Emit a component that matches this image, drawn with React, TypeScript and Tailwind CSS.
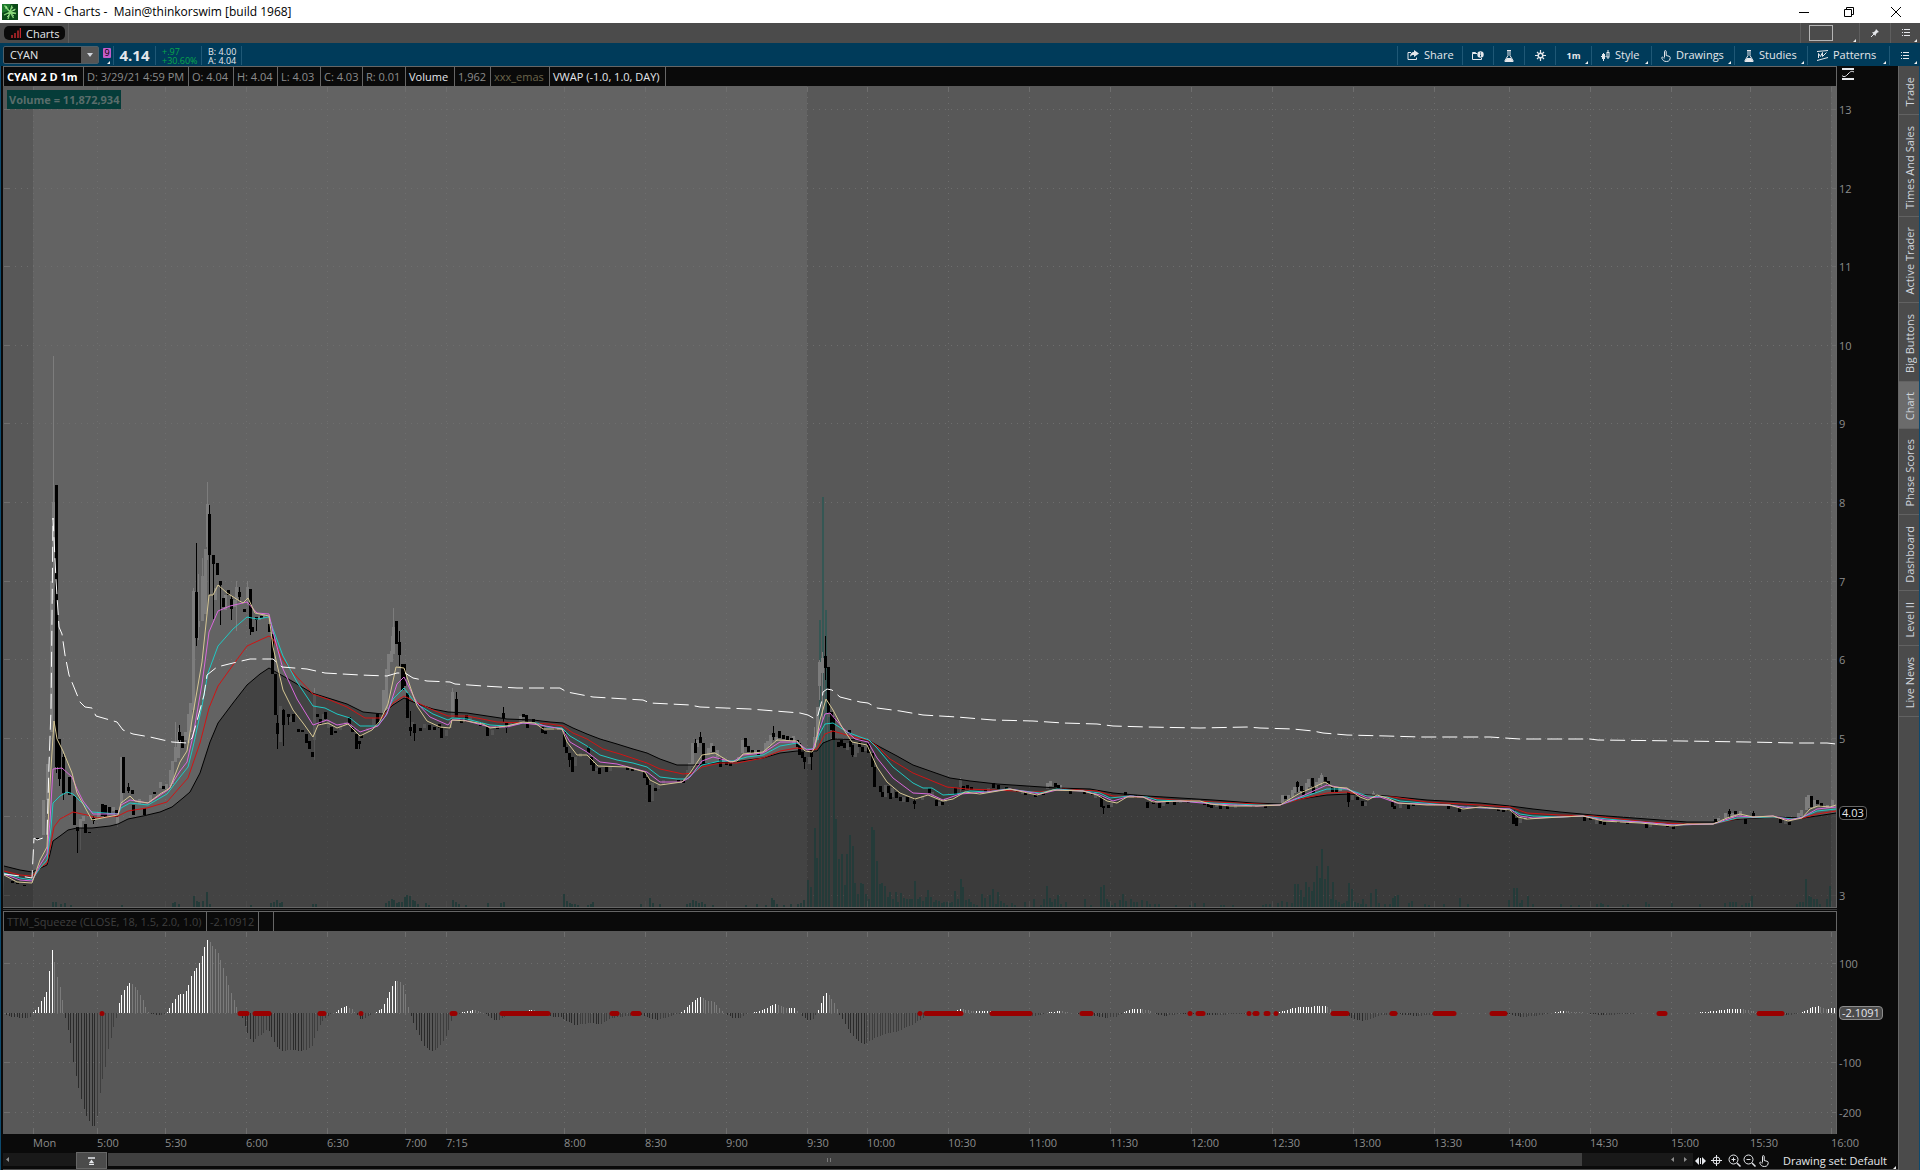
import type { ReactNode } from "react";

type Pt = [number, number];

const pts = (s: string): Pt[] => s.trim().split(/\s+/).map((p) => p.split(",").map(Number) as Pt);

/* ---------- market data, in chart units ---------- */

const SLOW = "4,866 20,870 32,872 47,865 50,854 53,841 60,836 68,830 77,828 92,828 110,826 118,824 128,819 143,816 160,812 172,807 183,798 190,792 200,773 210,742 218,723 233,703 247,685 260,674 269,668 283,676 297,684 312,693 328,698 347,704 363,712 383,714 393,705 404,698 418,704 433,709 448,712 467,713 487,716 507,719 533,720 550,722 563,723 573,728 587,734 600,739 617,744 633,749 647,753 660,759 677,765 693,765 713,763 733,762 763,758 780,753 797,751 817,751 823,743 833,739 868,740 880,747 897,756 913,765 930,771 950,778 970,781 997,784 1027,786 1057,788 1090,789 1113,793 1147,796 1180,798 1213,800 1253,803 1280,804 1300,799 1327,795 1350,794 1387,796 1427,800 1480,803 1510,806 1533,809 1560,812 1593,815 1647,819 1687,822 1713,822 1740,819 1773,817 1803,818 1817,816 1836,813";
const RED = "4,871 20,875 32,876 40,868 47,863 51,843 54,827 60,819 73,812 87,815 97,818 118,816 128,811 147,808 167,802 180,787 188,778 200,743 209,708 218,686 233,665 247,646 260,640 269,636 273,639 283,660 297,677 313,694 330,700 347,707 365,718 382,718 393,703 404,696 420,704 433,710 448,716 467,716 497,722 527,723 550,724 563,726 573,733 587,739 603,749 620,754 647,763 660,769 683,774 693,773 702,767 720,763 737,763 763,758 780,751 797,748 813,750 817,749 825,734 833,731 850,736 868,740 877,746 890,759 913,773 930,780 947,787 967,789 993,790 1040,792 1063,789 1097,791 1113,796 1143,797 1173,800 1213,802 1280,805 1297,800 1327,793 1347,792 1367,796 1393,797 1427,802 1480,805 1510,807 1527,813 1560,815 1593,816 1647,822 1683,824 1713,824 1740,818 1773,817 1790,819 1803,818 1817,814 1836,811";
const CYAN = "4,873 20,878 32,880 40,868 47,860 51,828 53,803 60,796 67,792 73,794 80,801 92,812 118,814 121,808 130,803 148,805 167,794 180,777 188,767 193,747 202,706 208,673 218,646 233,629 247,617 257,619 269,617 273,629 283,656 297,682 313,706 325,708 337,714 350,718 360,726 377,726 385,717 393,699 404,688 413,700 420,706 433,714 448,720 452,718 467,719 490,725 507,726 523,723 537,723 547,727 562,728 570,736 587,746 600,755 617,760 633,763 647,767 660,777 677,779 687,779 702,765 720,761 733,761 747,757 763,755 780,746 797,743 805,749 813,749 820,733 825,724 833,723 847,732 860,737 869,740 877,748 893,767 913,783 923,788 932,788 943,795 957,794 970,791 987,792 1007,789 1040,793 1057,789 1083,791 1100,793 1110,798 1130,796 1147,797 1157,800 1180,801 1213,803 1257,805 1280,805 1297,799 1327,789 1347,789 1367,796 1387,797 1400,801 1447,805 1463,807 1510,809 1520,814 1533,816 1560,817 1583,816 1607,819 1673,825 1713,824 1737,818 1773,817 1793,819 1803,817 1817,811 1836,809";
const PINK = "4,874 20,880 32,881 40,865 47,854 50,821 53,769 62,768 72,777 77,789 83,801 93,814 118,814 121,805 130,800 148,803 168,790 180,771 187,762 193,736 202,684 209,632 218,611 230,606 247,602 257,613 269,614 273,632 283,669 297,699 313,725 327,720 337,725 348,723 360,732 378,726 387,714 397,684 404,677 407,683 417,703 430,717 448,725 452,720 463,720 490,727 507,727 523,723 540,725 562,729 570,742 587,752 600,762 617,764 647,772 660,782 682,782 690,777 702,761 713,757 733,762 743,755 763,753 780,742 797,742 807,750 813,749 820,728 825,714 830,713 843,728 855,739 868,742 877,758 893,778 913,793 930,794 943,800 960,794 987,792 1010,789 1040,794 1057,790 1083,791 1100,795 1113,801 1130,796 1143,797 1157,802 1180,801 1213,804 1257,806 1280,805 1300,797 1327,785 1347,789 1367,798 1380,797 1397,803 1447,805 1463,807 1510,809 1520,816 1533,818 1560,817 1583,816 1604,820 1640,822 1673,825 1713,824 1737,816 1753,817 1773,816 1790,820 1803,817 1817,809 1836,807";
const TAN = "4,875 17,882 32,883 40,860 47,847 50,784 54,721 57,739 63,751 72,773 77,793 92,820 107,817 118,815 121,803 130,796 135,801 148,803 160,794 170,788 180,762 187,751 193,714 202,662 209,595 213,595 218,585 227,593 238,600 243,603 248,598 255,613 269,616 273,647 283,690 293,710 303,723 313,737 318,725 328,723 337,728 348,724 360,736 372,730 380,721 388,704 396,667 404,668 413,695 417,706 427,721 440,727 450,728 452,720 467,721 483,724 490,728 507,726 523,722 535,723 543,729 562,729 567,742 577,755 587,755 598,766 627,767 645,772 650,780 660,785 682,782 690,773 702,755 715,753 730,762 737,761 743,754 763,752 777,740 797,741 805,751 812,752 815,747 820,720 826,699 833,710 842,727 852,742 867,745 877,767 887,782 900,793 915,799 928,795 943,801 953,799 965,792 980,794 1010,789 1037,795 1053,790 1083,791 1097,795 1107,801 1117,803 1127,797 1143,797 1153,802 1180,801 1200,801 1210,804 1230,806 1257,806 1280,805 1290,799 1300,793 1312,788 1325,782 1333,787 1347,788 1360,797 1368,800 1377,795 1387,798 1398,803 1427,805 1450,805 1463,809 1480,807 1510,810 1518,817 1527,819 1560,817 1583,816 1603,821 1640,823 1673,826 1687,824 1713,824 1727,818 1740,814 1753,817 1773,816 1788,821 1802,818 1810,809 1818,806 1830,807 1836,805";
const VWAP = "4,874 20,876 32,878 34,838 37,840 43,838 47,836 49,765 51,710 52,617 53,518 56,580 59,627 62,634 65,655 69,675 80,702 85,707 92,708 96,716 117,722 123,730 133,734 150,737 172,742 187,743 192,738 197,721 201,706 204,695 207,675 217,667 233,663 250,659 273,659 282,667 307,669 325,673 360,675 387,676 397,673 405,673 413,678 427,681 450,682 455,684 483,686 517,688 560,688 567,692 593,697 643,700 650,703 690,705 700,707 750,709 800,713 808,715 815,719 818,715 822,700 823,692 827,689 832,690 840,697 860,702 868,703 877,708 900,711 923,715 957,717 993,720 1033,721 1063,723 1097,724 1113,726 1147,727 1200,728 1247,727 1260,728 1293,729 1313,731 1323,733 1347,735 1387,736 1420,737 1490,737 1520,739 1590,739 1598,740 1683,741 1747,742 1797,743 1827,743 1836,744";

/* x, body top, body bottom, optional wick top and wick bottom */
const DOWN = "12,881,883 17,883,884 24,885,886 37,838,840 56,485,767,485,773 59,739,779,739,786 63,757,793,754,800 69,777,795 74,796,825 77,827,831,827,853 85,824,833 89,832,833 93,818,821,816,824 102,804,816 105,805,817 109,807,813 116,810,817 123,757,793 128,787,791,783,793 132,790,794 133,805,815 144,808,815 154,792,794 163,786,789 179,732,740,725,743 182,736,748 196,592,638,543,646 209,514,555,505,595 213,555,564,555,619 217,563,575 220,581,585,581,625 223,598,607 228,590,595 231,599,609,596,620 239,592,597,587,601 244,609,612 250,589,629,589,635 252,627,632 256,617,620,617,631 261,616,618 269,624,632 272,634,674 275,674,715 277,723,734,715,749 283,710,725,709,746 288,714,717,714,725 293,714,722 298,729,732 302,730,732 306,734,743 309,741,749 312,752,757 317,714,717 320,719,725 325,712,719 331,727,735 335,731,733 349,717,725 352,727,732 356,734,749 359,741,744,741,749 361,735,738 377,714,726 396,621,644 399,642,655,631,666 402,664,690 404,664,686 407,693,718 410,727,731,711,736 414,724,733,724,741 420,728,731 429,725,730 434,727,730 441,728,738 439,724,728 456,699,717,692,717 461,718,723 466,715,722 480,722,726 487,727,736 497,726,729 503,713,718,707,722 506,723,728,723,733 523,714,717 526,715,722 527,723,728 533,719,722 542,727,733 545,731,734 555,728,730 564,732,747 566,747,753 569,753,760,753,767 572,757,772 588,748,753,746,753 591,757,765 593,763,771 599,768,774 606,767,772 627,767,770 632,768,771 644,772,778 647,777,785 649,785,802 655,788,791 678,780,782 683,780,783 695,743,753,739,753 700,737,743,732,743 703,743,765 713,746,752 720,758,767 726,762,765 730,763,766 745,738,747 748,746,752 752,750,753 758,750,755 773,733,737,726,740 779,731,738 783,735,739 787,736,740 791,738,741 797,740,747 799,743,755 802,752,758 804,757,762,757,769 811,750,757,750,770 825,656,668,636,680 828,667,713 831,712,730 833,717,740 838,742,747 841,740,746 844,743,748 849,730,734 850,741,747 852,745,755,745,757 859,742,747 862,747,752 868,743,753 872,753,767 874,767,787 880,786,792 882,792,797 888,786,793 890,793,799 896,792,798 900,797,801 907,797,802 914,801,804,798,809 929,788,793 936,800,806 942,802,805 955,788,795 963,786,790 967,785,789 971,787,790 978,792,794 985,790,793 993,783,788 998,785,789 1006,787,790 1017,790,792 1025,792,795 1035,793,797 1043,792,795 1055,783,787 1058,785,788 1063,788,791 1070,790,794 1084,792,794 1092,792,795 1101,797,807 1103,806,808,806,814 1108,805,808 1125,792,795 1135,795,798 1147,802,808 1153,801,804 1159,803,808 1167,801,804 1174,802,805 1188,800,803 1204,803,805 1208,803,807 1211,805,808 1220,805,809 1227,806,809 1253,805,807 1265,806,808 1285,796,799 1297,782,787,781,792 1301,786,791 1303,790,795 1312,778,786 1313,786,793 1325,777,782 1328,781,785 1332,787,792 1336,788,792 1348,792,802,792,807 1357,797,800 1362,801,806 1375,795,798 1392,802,807 1394,806,809 1408,805,809 1413,804,806 1448,805,809 1459,808,812 1465,806,808 1487,807,809 1498,808,811 1503,808,812 1508,809,811 1513,810,824 1516,818,826 1528,817,819 1584,817,821 1590,818,820 1600,821,824 1604,822,825 1618,821,823 1627,822,824 1646,823,828 1657,823,825 1667,824,827 1673,826,829 1715,819,822 1729,811,814,809,818 1735,811,814 1745,818,824 1753,813,816,811,816 1780,818,823 1789,822,825 1811,796,807 1817,800,804 1821,803,807";
const UP = "43,800,835 47,764,800 51,581,732 53,502,560,356,600 80,819,828,819,850 83,816,821 98,812,817 113,807,811 121,757,803 117,817,824,817,827 139,799,804 150,795,802 160,782,788 166,784,789 170,770,786 172,761,784 175,747,762,722,762 178,732,758,728,758 185,732,740 188,714,743 190,703,732 193,591,710,588,710 198,621,627,574,640 202,576,621,558,621 205,549,614 207,504,547,482,560 215,588,600 225,595,610 234,600,607 236,587,599,581,631 247,587,599,581,605 259,616,620 263,614,618 280,706,742 290,716,722 314,695,740,688,760 323,714,722 328,720,728 340,725,730 345,722,725 367,728,731 373,718,725 383,690,714 386,669,710 388,654,675 391,651,662,636,662 393,627,654,608,654 412,722,731 424,724,728 446,730,736 450,720,728 452,692,718,688,718 470,717,721 492,730,735 510,722,726 520,716,722 575,757,766 580,753,757 596,768,771 610,766,771 652,783,801 658,785,789 663,780,785 687,770,780 689,763,773 692,743,767 697,740,747 708,748,755 711,743,752 717,750,757 723,760,764 738,757,761 742,740,753 755,750,754 765,743,752 767,741,748 770,735,745 776,737,741 793,736,743 809,757,764 814,737,747,727,747 817,707,740 819,662,686,660,700 822,658,673,652,720 847,743,750 855,743,757 857,743,753 865,746,751 885,785,797 892,788,797 903,797,802 922,796,800 932,792,797 939,802,806 945,798,802 960,780,787,778,792 988,788,792 1022,791,794 1047,783,789 1050,781,786 1060,785,789 1095,793,798 1111,803,807 1163,802,806 1180,800,803 1216,804,807 1235,804,808 1282,795,803 1288,795,801 1292,790,797 1294,787,793 1299,786,792 1306,783,790 1308,779,787 1316,782,788 1319,778,785 1321,775,782,773,786 1340,787,791 1352,795,800 1365,802,806 1373,793,798,791,798 1400,804,808 1520,818,823 1525,816,820 1596,820,824 1650,823,827 1718,818,822 1725,813,818 1732,813,818 1740,811,816 1785,820,824 1798,813,818 1801,810,816 1806,797,810 1808,795,808 1814,800,807 1827,805,808 1832,800,807";

const VOLUME = "52,5 55,5 60,3 64,4 70,2 121,2 172,4 174,5 178,3 193,11 196,6 198,5 202,6 206,15 209,3 250,2 270,4 273,5 276,7 279,4 281,5 312,3 315,3 385,4 388,6 391,8 393,7 396,4 398,5 401,5 404,10 406,12 409,11 412,7 414,6 417,3 425,4 428,2 452,7 455,5 458,3 465,2 487,4 500,4 503,5 563,13 566,6 569,4 571,3 574,3 577,2 587,2 590,3 592,5 640,3 649,9 652,4 659,3 686,3 689,4 692,7 695,6 698,4 701,5 704,3 712,2 745,2 756,3 765,2 771,9 773,7 776,3 783,2 790,3 797,3 800,4 803,7 807,27 810,20 814,79 816,49 819,287 822,410 825,297 828,190 833,190 835,88 838,48 841,53 844,22 846,53 849,72 852,61 854,24 857,13 860,24 862,23 865,13 868,8 871,80 873,77 876,46 879,23 881,24 884,21 887,10 889,15 892,8 895,15 897,5 900,14 903,9 906,8 909,8 911,8 914,26 917,8 919,10 922,6 925,10 927,17 930,10 933,5 935,7 938,6 941,4 943,5 946,5 949,4 951,5 954,16 957,8 960,28 962,20 965,7 968,8 970,5 973,3 976,2 981,13 984,9 989,12 992,18 995,3 997,15 1000,6 1003,4 1006,2 1011,4 1014,2 1024,5 1033,8 1040,2 1043,8 1046,21 1049,9 1051,5 1054,8 1057,12 1060,3 1065,5 1084,8 1090,2 1100,20 1103,22 1106,8 1108,5 1111,2 1114,4 1119,7 1122,13 1125,6 1130,8 1133,5 1136,5 1141,7 1146,6 1149,3 1154,3 1158,3 1175,2 1189,2 1194,4 1203,4 1220,2 1223,2 1232,2 1262,2 1265,3 1269,3 1277,4 1281,6 1286,5 1291,4 1294,23 1297,23 1300,17 1303,10 1305,25 1308,20 1311,16 1313,25 1316,41 1319,29 1321,58 1324,28 1327,41 1330,8 1332,25 1335,7 1338,5 1341,3 1343,4 1346,6 1348,24 1351,18 1354,5 1357,4 1360,3 1362,8 1365,3 1370,14 1375,18 1378,4 1384,3 1389,3 1392,9 1394,11 1397,12 1408,4 1411,6 1424,3 1428,2 1443,3 1459,9 1467,3 1508,7 1513,19 1516,19 1519,4 1521,7 1527,11 1532,3 1560,3 1570,2 1578,2 1596,3 1600,4 1602,3 1607,2 1622,2 1627,3 1645,5 1648,3 1671,4 1699,3 1724,4 1729,5 1732,5 1735,5 1741,2 1745,4 1748,4 1751,11 1796,3 1799,5 1802,5 1805,28 1808,11 1810,10 1813,8 1816,8 1819,3 1826,8 1829,21";

const MOMENTUM = pts("6,-2 12,-4 25,-5 30,-4 33,1 37,4 41,12 46,19 49,43 52,66 54,52 57,36 60,25 63,9 65,-5 68,-19 71,-33 73,-49 76,-65 79,-78 84,-97 87,-105 90,-110 92,-113 95,-113 98,-99 100,-78 103,-63 106,-50 108,-35 111,-23 114,-11 117,-2 119,13 122,20 125,25 130,31 133,28 138,22 143,12 147,2 150,-1 158,-2 165,-1 168,3 173,11 178,19 183,19 187,24 192,40 198,47 203,61 206,72 208,74 211,69 216,63 219,57 222,48 227,33 230,23 236,7 239,-1 242,-5 246,-17 249,-25 253,-29 257,-24 262,-21 266,-17 268,-17 273,-27 276,-33 281,-38 291,-37 300,-38 306,-37 311,-34 316,-20 320,-11 325,-5 330,-1 335,1 340,4 346,7 352,4 356,-1 361,-7 370,-2 376,1 381,4 385,11 390,23 395,33 400,31 404,26 407,10 410,-1 416,-17 424,-33 431,-38 437,-36 442,-30 448,-18 452,-4 457,-2 462,1 474,3 480,1 486,-1 492,-6 498,-8 504,-4 510,-2 515,1 533,3 545,-3 560,-4 565,-7 575,-12 590,-10 600,-11 612,-5 620,-4 635,-2 642,-2 648,-5 658,-7 670,-3 678,-1 682,1 690,9 697,15 701,16 708,12 714,11 720,4 725,-1 733,-5 740,-5 746,-1 753,1 760,2 766,5 776,9 785,5 794,5 800,-1 807,-7 812,-7 817,0 820,8 825,21 829,18 835,9 839,-1 844,-9 849,-19 856,-26 863,-31 868,-29 875,-25 885,-21 895,-19 905,-15 915,-10 925,-3 935,-1 955,2 960,4 972,2 990,2 1000,-1 1030,-3 1042,-2 1048,1 1060,2 1080,-1 1095,-3 1105,-5 1115,-4 1122,0 1126,2 1132,4 1142,4 1150,2 1156,-1 1165,-3 1180,-1 1215,-2 1240,-1 1275,0 1283,2 1290,4 1298,6 1325,7 1331,3 1336,-1 1348,-3 1354,-6 1363,-8 1372,-5 1382,-2 1398,-1 1415,-3 1440,-1 1460,0 1508,-1 1520,-4 1535,-3 1545,-1 1555,1 1562,2 1580,1 1590,-1 1604,-2 1625,-1 1650,0 1690,0 1715,2 1728,4 1740,4 1752,2 1760,0 1785,-2 1798,-1 1804,2 1810,5 1818,7 1826,4 1836,5");

const SQUEEZE = pts("102,102 240,247 255,269 320,324 361,361 452,455 502,548 612,617 633,639 920,920 926,961 992,1030 1082,1091 1190,1190 1198,1203 1249,1249 1255,1257 1266,1268 1276,1276 1333,1347 1392,1395 1435,1454 1492,1505 1659,1665 1759,1782");

const TIMES: [string, number][] = [
  ["Mon", 33], ["5:00", 97], ["5:30", 165], ["6:00", 246], ["6:30", 327], ["7:00", 405], ["7:15", 446],
  ["8:00", 564], ["8:30", 645], ["9:00", 726], ["9:30", 807], ["10:00", 867], ["10:30", 948], ["11:00", 1029],
  ["11:30", 1110], ["12:00", 1191], ["12:30", 1272], ["13:00", 1353], ["13:30", 1434], ["14:00", 1509],
  ["14:30", 1590], ["15:00", 1671], ["15:30", 1750], ["16:00", 1831],
];

const PRICES: [number, number][] = [
  [13, 109], [12, 188], [11, 266], [10, 345], [9, 423], [8, 502], [7, 581], [6, 659], [5, 738], [4, 816], [3, 895],
];

/* ---------- charts ---------- */

function momentumBars() {
  const out: { x: number; h: number; color: string }[] = [];
  let prev = 0;
  let k = 0;
  for (let i = 0; i < 683; i++) {
    const x = 6 + i * 2.68;
    while (k < MOMENTUM.length - 2 && MOMENTUM[k + 1][0] < x) k++;
    const [x0, y0] = MOMENTUM[k];
    const [x1, y1] = MOMENTUM[k + 1];
    const h = y0 + ((y1 - y0) * (x - x0)) / (x1 - x0);
    const color = h > 0 ? (h >= prev ? "#ffffff" : "#7b7b7b") : h <= prev ? "#2a2a2a" : "#3e3e3e";
    if (Math.abs(h) >= 0.6) out.push({ x: Math.round(x), h: Math.round(h), color });
    prev = h;
  }
  return out;
}

function candles(data: string, color: string) {
  return data.split(" ").map((c) => {
    const [x, t, b, wt, wb] = c.split(",").map(Number);
    return (
      <g key={c} fill={color}>
        <rect x={x - 1} y={t} width={3} height={b - t} />
        {wt !== undefined && <rect x={x} y={wt} width={1} height={wb - wt} />}
      </g>
    );
  });
}

function Grid({ top, bottom, rows }: { top: number; bottom: number; rows: number[] }) {
  return (
    <g stroke="#6e6e6e" strokeWidth={1} shapeRendering="crispEdges">
      {TIMES.map(([t, x]) => (
        <g key={t}>
          <line x1={x + 0.5} x2={x + 0.5} y1={top + 5} y2={bottom - 5} strokeDasharray="1 5" />
          <line x1={x + 0.5} x2={x + 0.5} y1={top + 1} y2={top + 5} />
          <line x1={x + 0.5} x2={x + 0.5} y1={bottom - 5} y2={bottom} />
        </g>
      ))}
      {rows.map((y) => (
        <g key={y}>
          <line x1={9} x2={1831} y1={y + 0.5} y2={y + 0.5} strokeDasharray="1 5" />
          <line x1={4} x2={9} y1={y + 0.5} y2={y + 0.5} />
          <line x1={1832} x2={1836} y1={y + 0.5} y2={y + 0.5} />
        </g>
      ))}
    </g>
  );
}

function PriceChart() {
  return (
    <svg viewBox="3 86 1833 821" preserveAspectRatio="none" className="block min-h-0 w-full flex-1 bg-[#585858]" aria-label="CYAN price chart">
      <rect x={33} y={86} width={774} height={821} fill="#636363" />
      <rect x={1831} y={86} width={5} height={821} fill="#636363" />
      <Grid top={86} bottom={907} rows={PRICES.map((p) => p[1])} />
      <g fill="#355754">
        {pts(VOLUME).map(([x, h]) => (
          <rect key={x} x={x} y={907 - h} width={2} height={h} />
        ))}
      </g>
      {candles(UP, "#7d7d7d")}
      {candles(DOWN, "#000000")}
      <polygon points={`${SLOW} 1836,907 3,907`} fill="#000000" fillOpacity={0.32} />
      <g fill="none" strokeWidth={1}>
        <polyline points={SLOW} stroke="#000000" />
        <polyline points={RED} stroke="#d01414" />
        <polyline points={CYAN} stroke="#1fc9c4" />
        <polyline points={PINK} stroke="#d968dc" />
        <polyline points={TAN} stroke="#d6c794" />
        <polyline points={VWAP} stroke="#ffffff" strokeDasharray="15 6" />
      </g>
    </svg>
  );
}

function SqueezeChart() {
  return (
    <svg viewBox="3 931 1833 203" preserveAspectRatio="none" className="block min-h-0 w-full flex-1 bg-[#585858]" aria-label="TTM Squeeze histogram">
      <Grid top={931} bottom={1134} rows={[963, 1013, 1062, 1112]} />
      {momentumBars().map(({ x, h, color }) => (
        <rect key={x} x={x} width={1} y={h > 0 ? 1013 - h : 1013} height={Math.abs(h)} fill={color} />
      ))}
      <g stroke="#990000" strokeWidth={5} strokeLinecap="round">
        {SQUEEZE.map(([a, b]) => (
          <line key={a} x1={a} x2={b + 0.01} y1={1013.5} y2={1013.5} />
        ))}
      </g>
    </svg>
  );
}

/* ---------- icons ---------- */

const Svg = ({ w, h = w, children }: { w: number; h?: number; children: ReactNode }) => (
  <svg width={w} height={h} viewBox={`0 0 ${w} ${h}`} fill="none" stroke="currentColor" className="shrink-0" aria-hidden="true">
    {children}
  </svg>
);

const Corner = () => (
  <svg width={3} height={3} viewBox="0 0 3 3" className="absolute right-[3px] bottom-[1px]" aria-hidden="true">
    <path d="M3 0v3H0z" fill="#f0f0f0" />
  </svg>
);

const AppLogo = () => (
  <Svg w={16}>
    <rect width={16} height={16} fill="#0b4a17" stroke="none" />
    <path d="M0 0h9L6 7 0 9z" fill="#1f7a2e" stroke="none" />
    <path d="M8 8 2.500 1.500M8 8l2-6.500M8 8l5.500-3M8 8l6 1.500M8 8l3.500 6M8 8l-2 7M8 8l-6 3" stroke="#86d677" strokeWidth={1.3} />
    <path d="m4 2 1 2-2 0M11 3l-1.500 2M13 6l-2 .5M12 12l-2-1.500M5 13l2-2" stroke="#b9efab" strokeWidth={0.8} />
  </Svg>
);

const ShareIcon = () => (
  <Svg w={12} h={11}>
    <path d="M4 2.500H1v7h8.500V7.500" />
    <path d="M7 0v2C4.500 2 3 4 3 7c1-1.500 2-2 4-2v2l5-3.500z" fill="currentColor" stroke="none" />
  </Svg>
);
const FolderInfoIcon = () => (
  <Svg w={12} h={10}>
    <path d="M5 2.500H.5v6h9V7M.5 2.500v-1h3l1 1" />
    <circle cx={8.500} cy={3.500} r={3.200} fill="currentColor" stroke="none" />
    <path d="M8.500 1.500v1M8.500 3.500v2" stroke="#003b5a" />
  </Svg>
);
const FlaskIcon = () => (
  <Svg w={10} h={12}>
    <path d="M3 .5h4M4 1v4.500L1 10.500v1h8v-1L6 5.500V1" />
    <path d="M3 8h4l2.500 3.500h-9z" fill="currentColor" stroke="none" />
  </Svg>
);
const GearIcon = () => (
  <Svg w={11}>
    <circle cx={5.500} cy={5.500} r={2.300} strokeWidth={1.500} />
    <path d="M5.500 0v3M5.500 8v3M0 5.500h3M8 5.500h3M2 2l1.500 1.500M7.500 7.500 9 9M9 2 7.500 3.500M3.500 7.500 2 9" strokeWidth={1.200} />
  </Svg>
);
const StyleIcon = () => (
  <Svg w={9} h={12}>
    <path d="M2.500 3v8M7 0v9" />
    <rect x={1} y={4} width={3} height={5} fill="currentColor" stroke="none" />
    <rect x={6} y={2.500} width={2} height={4.500} fill="#003b5a" />
    <path d="M0 6.500h1M4.500 6.500h1" />
  </Svg>
);
const HandIcon = () => (
  <Svg w={10} h={12}>
    <path d="M3.500 7.500V1.500a.8.8 0 0 1 1.700 0V5.500l3 .8c.8.200 1 .7 1 1.200 0 2-.8 4-3.700 4S2 10.300.8 8.200C.5 7.200 1.500 6.700 2.200 7.500l1 1" />
  </Svg>
);
const PatternsIcon = () => (
  <Svg w={11} h={11}>
    <path d="M0 1.500 11 .5M0 10.500 11 7.500M1.500 8V3.500l2 3 2-4v4l4-4" />
  </Svg>
);
const ListIcon = () => (
  <Svg w={8} h={8}>
    <path d="M0 .5h1M0 3.500h1M0 6.500h1M2 .5h6M2 3.500h6M2 6.500h6" />
  </Svg>
);
const PinIcon = () => (
  <Svg w={8} h={8}>
    <path d="M5 0l3 3-1.500.5L5 5l-.5 2L1 3.500 3 3l1.500-1.500z" fill="currentColor" stroke="none" />
    <path d="M3 5 0 8" />
  </Svg>
);

/* ---------- bars ---------- */

function TitleBar() {
  return (
    <header className="flex h-[23px] shrink-0 items-center bg-white pl-[2px] text-black">
      <AppLogo />
      <h1 className="ml-[5px] grow whitespace-pre text-xs">{"CYAN - Charts -  Main@thinkorswim [build 1968]"}</h1>
      <button aria-label="Minimize" className="flex w-[45px] justify-center">
        <Svg w={10}><path d="M0 5.500h10" /></Svg>
      </button>
      <button aria-label="Restore" className="flex w-[45px] justify-center">
        <Svg w={10}><path d="M.5 2.500h7v7h-7zM2.500 2.500v-2h7v7h-2" /></Svg>
      </button>
      <button aria-label="Close" className="flex w-[49px] justify-center">
        <Svg w={10}><path d="M0 0l10 10M10 0 0 10" /></Svg>
      </button>
    </header>
  );
}

function TabBar() {
  return (
    <nav className="flex h-5 shrink-0 items-stretch bg-[#4b4b4b] pl-1">
      <button className="my-[3px] flex w-[61px] items-center gap-[5px] rounded-[5px] bg-[#0a0a0a] pl-[7px] leading-none text-gray-200">
        <Svg w={10}>
          <path d="M1 7v3M4 5v5M7 2.500V10M9.500 0v10" stroke="#c0282d" strokeWidth={1.500} />
        </Svg>
        Charts
      </button>
      <div className="ml-[3px] grow border-l border-[#5e5e5e]" />
      <button aria-label="Layout" className="relative flex w-[59px] items-center border-l border-[#5e5e5e] pl-2">
        <span className="h-4 w-6 border border-[#b5b5b5]" />
        <Corner />
      </button>
      <button aria-label="Pin" className="flex w-[31px] items-center justify-center border-l border-[#5e5e5e] text-gray-200"><PinIcon /></button>
      <button aria-label="Menu" className="relative flex w-[30px] items-center justify-center border-l border-[#5e5e5e] text-gray-200"><ListIcon /><Corner /></button>
    </nav>
  );
}

const TOOLS: { name: string; label?: string; icon?: ReactNode; cls: string; corner?: boolean }[] = [
  { name: "Share", label: "Share", icon: <ShareIcon />, cls: "w-[65px]" },
  { name: "Workspace info", icon: <FolderInfoIcon />, cls: "w-[31px]" },
  { name: "Edit studies", icon: <FlaskIcon />, cls: "w-[31px]" },
  { name: "Settings", icon: <GearIcon />, cls: "w-[31px]" },
  { name: "Time frame", icon: <b className="text-[9px]">1m</b>, cls: "w-[36px]", corner: true },
  { name: "Style", label: "Style", icon: <StyleIcon />, cls: "w-[60px]", corner: true },
  { name: "Drawings", label: "Drawings", icon: <HandIcon />, cls: "w-[83px]", corner: true },
  { name: "Studies", label: "Studies", icon: <FlaskIcon />, cls: "w-[73px]", corner: true },
  { name: "Patterns", label: "Patterns", icon: <PatternsIcon />, cls: "w-[82px]", corner: true },
  { name: "Chart menu", icon: <ListIcon />, cls: "w-[31px]", corner: true },
];

function SymbolBar() {
  return (
    <div className="flex h-[23px] shrink-0 items-stretch bg-[#003b5a] pt-[3px] pb-px pl-[3px] text-gray-200">
      <label className="mb-px flex w-24 rounded-[2px] border border-[#4f5f68] bg-[#0f0f0f]">
        <input aria-label="Symbol" defaultValue="CYAN" className="w-0 grow bg-transparent pl-[6px] outline-none" />
        <button aria-label="Symbol list" className="flex w-[17px] items-center justify-center bg-[#555555] text-gray-300">
          <Svg w={6} h={4}><path d="M0 0h6L3 4z" fill="currentColor" stroke="none" /></Svg>
        </button>
      </label>
      <button aria-label="Link group 9" className="relative ml-1 w-[10px]">
        <span className="absolute top-[2px] left-0 h-[10px] w-2 rounded-[1px] bg-[#c45ccb] text-center text-[9px] leading-[10px] text-black">9</span>
        <Corner />
      </button>
      <strong className="flex w-[42px] items-center justify-center border-l border-[#1f5876] text-[15px] leading-none">4.14</strong>
      <div className="flex w-[46px] flex-col justify-center border-l border-[#1f5876] pl-[6px] text-[9px] leading-[9px] text-[#0aa84a]">
        <span>+.97</span>
        <span>+30.60%</span>
      </div>
      <div className="flex w-[41px] flex-col justify-center border-x border-[#1f5876] pl-[6px] text-[9px] leading-[9px]">
        <span>B: 4.00</span>
        <span>A: 4.04</span>
      </div>
      <div className="grow" />
      {TOOLS.map((t) => (
        <button key={t.name} aria-label={t.name} className={`relative flex items-center border-l border-[#1f5876] ${t.cls} ${t.label ? "gap-[5px] pl-[9px]" : "justify-center"}`}>
          {t.icon}
          {t.label}
          {t.corner && <Corner />}
        </button>
      ))}
    </div>
  );
}

const CELLS: [string, string][] = [
  ["CYAN 2 D 1m", "w-[80px] font-bold text-white"],
  ["D: 3/29/21 4:59 PM", "w-[105px] text-[#8c8c8c]"],
  ["O: 4.04", "w-[45px] text-[#8c8c8c]"],
  ["H: 4.04", "w-[44px] text-[#8c8c8c]"],
  ["L: 4.03", "w-[43px] text-[#8c8c8c]"],
  ["C: 4.03", "w-[42px] text-[#8c8c8c]"],
  ["R: 0.01", "w-[43px] text-[#8c8c8c]"],
  ["Volume", "w-[49px] text-gray-200"],
  ["1,962", "w-[36px] text-[#8c8c8c]"],
  ["xxx_emas", "w-[59px] text-[#6b654c]"],
  ["VWAP (-1.0, 1.0, DAY)", "w-[116px] text-gray-200"],
];

const SIDE_TABS: [string, string][] = [
  ["Trade", "h-[49px]"],
  ["Times And Sales", "h-[102px]"],
  ["Active Trader", "h-[86px]"],
  ["Big Buttons", "h-[79px]"],
  ["Chart", "h-[47px]"],
  ["Phase Scores", "h-[86px]"],
  ["Dashboard", "h-[76px]"],
  ["Level II", "h-[55px]"],
  ["Live News", "h-[71px]"],
];

function SideTabs() {
  return (
    <aside className="flex w-[22px] shrink-0 flex-col border-r border-l border-r-[#0d4a6e] border-l-[#666666] bg-[#4b4b4b] text-gray-300">
      {SIDE_TABS.map(([name, h]) => (
        <button key={name} className={`flex items-center justify-center border-b border-[#626262] pt-[3px] ${h} ${name === "Chart" ? "bg-[#6b6b6b]" : ""}`}>
          <span className="rotate-180 whitespace-nowrap leading-none [writing-mode:vertical-rl]">{name}</span>
        </button>
      ))}
    </aside>
  );
}

const AxisLabel = ({ top, children }: { top: number; children: ReactNode }) => (
  <span className="absolute left-[2px] -translate-y-1/2 leading-4 text-[#8c8c8c]" style={{ top: `${top}%` }}>
    {children}
  </span>
);

const AxisBadge = ({ top, cls, children }: { top: number; cls: string; children: ReactNode }) => (
  <span className={`absolute left-[2px] -translate-y-1/2 rounded-[4px] border px-[2px] leading-[12px] text-gray-200 ${cls}`} style={{ top: `${top}%` }}>
    {children}
  </span>
);

function PricePanel() {
  const at = (y: number) => ((y - 66) / 841) * 100;
  return (
    <section className="flex min-h-0 grow-[841] basis-0">
      <div className="flex min-w-0 grow flex-col">
        <div className="flex h-5 shrink-0 border-t border-l border-[#666666]">
          {CELLS.map(([text, cls]) => (
            <span key={text} className={`shrink-0 border-r border-[#666666] pl-[3px] leading-[19px] whitespace-nowrap ${cls}`}>{text}</span>
          ))}
        </div>
        <div className="relative flex min-h-0 grow flex-col">
          <PriceChart />
          <span className="absolute top-1 left-1 bg-[#053c39] px-[2px] leading-[19px] font-bold text-[#5a6d6b]">Volume = 11,872,934</span>
        </div>
      </div>
      <div className="relative w-[62px] shrink-0 border-l border-[#666666]">
        <span className="absolute top-[2px] left-[5px] text-gray-200">
          <Svg w={12} h={12}>
            <path d="M0 1h12M0 11h12" strokeWidth={2} />
            <path d="M0 7.500c1 1.500 3 1.500 4.500 0L7.500 4.500C9 3 10.500 3 12 4" />
          </Svg>
        </span>
        {PRICES.filter(([p]) => p !== 4).map(([p, y]) => (
          <AxisLabel key={p} top={at(y + 1)}>{p}</AxisLabel>
        ))}
        <AxisBadge top={at(813)} cls="border-[#666666] bg-black">4.03</AxisBadge>
      </div>
    </section>
  );
}

function SqueezePanel() {
  const at = (y: number) => ((y - 911) / 223) * 100;
  return (
    <section className="flex min-h-0 grow-[223] basis-0">
      <div className="flex min-w-0 grow flex-col">
        <div className="flex h-5 shrink-0 border-t border-l border-[#666666] leading-[19px] whitespace-nowrap text-[#3f3f3f]">
          <span className="w-[203px] border-r border-[#666666] pl-[3px]">TTM_Squeeze (CLOSE, 18, 1.5, 2.0, 1.0)</span>
          <span className="w-[52px] border-r border-[#666666] pl-[3px]">-2.10912</span>
          <span className="w-[15px] border-r border-[#666666]" />
        </div>
        <SqueezeChart />
      </div>
      <div className="relative w-[62px] shrink-0 border-l border-[#666666]">
        {[[100, 964], [-100, 1063], [-200, 1113]].map(([v, y]) => (
          <AxisLabel key={v} top={at(y)}>{v}</AxisLabel>
        ))}
        <AxisBadge top={at(1013)} cls="border-[#8c8c8c] bg-[#4b4b4b]">-2.1091</AxisBadge>
      </div>
    </section>
  );
}

function TimeAxis() {
  return (
    <div className="mr-[62px] h-[19px] shrink-0 text-[#8c8c8c]">
      <div className="relative h-full">
        {TIMES.map(([t, x]) => (
          <span key={t} className="absolute top-[1px] leading-4 whitespace-nowrap" style={{ left: `${((x - 3) / 1833) * 100}%` }}>{t}</span>
        ))}
      </div>
    </div>
  );
}

function BottomBar() {
  return (
    <footer className="flex h-[17px] shrink-0 items-start border-b border-[#4b4b4b] text-gray-200">
      <button aria-label="Scroll left" className="flex h-[13px] w-[73px] items-center bg-[#191919] pl-[3px] text-[#8c8c8c]">
        <Svg w={3} h={5}><path d="M3 0v5L0 2.500z" fill="currentColor" stroke="none" /></Svg>
      </button>
      <button aria-label="Reset view" className="-mt-px flex h-[17px] w-[31px] items-center justify-center border border-[#666666] bg-[#4b4b4b]">
        <Svg w={7} h={8}><path d="M0 1h7M1 7.500h5" strokeWidth={1.500} /><path d="M3.500 2.500 6 6H1z" fill="currentColor" stroke="none" /></Svg>
      </button>
      <div className="ml-px flex h-[13px] grow bg-[#191919]">
        <div className="flex grow items-center justify-center bg-[#404040] pr-8 text-[#7a7a7a]">
          <Svg w={4} h={4}><path d="M.5 0v4M3.500 0v4" /></Svg>
        </div>
        <div className="flex w-[111px] items-center justify-end gap-[10px] pr-[6px] text-[#8c8c8c]">
          <Svg w={3} h={5}><path d="M3 0v5L0 2.500z" fill="currentColor" stroke="none" /></Svg>
          <Svg w={3} h={5}><path d="M0 0v5l3-2.500z" fill="currentColor" stroke="none" /></Svg>
        </div>
      </div>
      <div className="relative flex h-[15px] w-[205px] items-center pl-[2px] leading-none">
        <button aria-label="Expand" className="w-[16px]">
          <Svg w={11} h={8}><path d="M0 4l4-4v8zM11 4 7 0v8z" fill="currentColor" stroke="none" /><path d="M5.500 1v6" /></Svg>
        </button>
        <button aria-label="Crosshair" className="w-[17px]">
          <Svg w={11} h={11}><circle cx={5.500} cy={5.500} r={3.500} /><path d="M5.500 0v11M0 5.500h11" /></Svg>
        </button>
        <button aria-label="Zoom in" className="w-[15px]">
          <Svg w={13} h={13}><circle cx={5.500} cy={5.500} r={4.500} /><path d="M9 9l3.500 3.500" strokeWidth={1.500} /><path d="M5.500 3.500v4M3.500 5.500h4" /></Svg>
        </button>
        <button aria-label="Zoom out" className="w-[16px]">
          <Svg w={13} h={13}><circle cx={5.500} cy={5.500} r={4.500} /><path d="M9 9l3.500 3.500" strokeWidth={1.500} /><path d="M3.500 5.500h4" /></Svg>
        </button>
        <button aria-label="Pan" className="w-[24px]"><HandIcon /></button>
        <button className="whitespace-nowrap">Drawing set: Default</button>
        <svg width={3} height={3} viewBox="0 0 3 3" className="absolute right-[2px] -bottom-px" aria-hidden="true">
          <path d="M3 0v3H0z" fill="#f0f0f0" />
        </svg>
      </div>
    </footer>
  );
}

export default function App() {
  return (
    <div className="flex h-screen w-full flex-col overflow-hidden bg-[#0a0a0a] font-['Open_Sans','Noto_Sans',sans-serif] text-[11px]">
      <TitleBar />
      <TabBar />
      <SymbolBar />
      <main className="flex min-h-0 grow border-l border-[#0d4a6e]">
        <div className="flex min-w-0 grow flex-col pl-[2px]">
          <PricePanel />
          <div className="mr-[61px] h-1 shrink-0 border-t border-[#666666]">
            <div className="mt-px h-px bg-[#3a3a3a]" />
          </div>
          <SqueezePanel />
          <TimeAxis />
          <BottomBar />
        </div>
        <SideTabs />
      </main>
    </div>
  );
}
